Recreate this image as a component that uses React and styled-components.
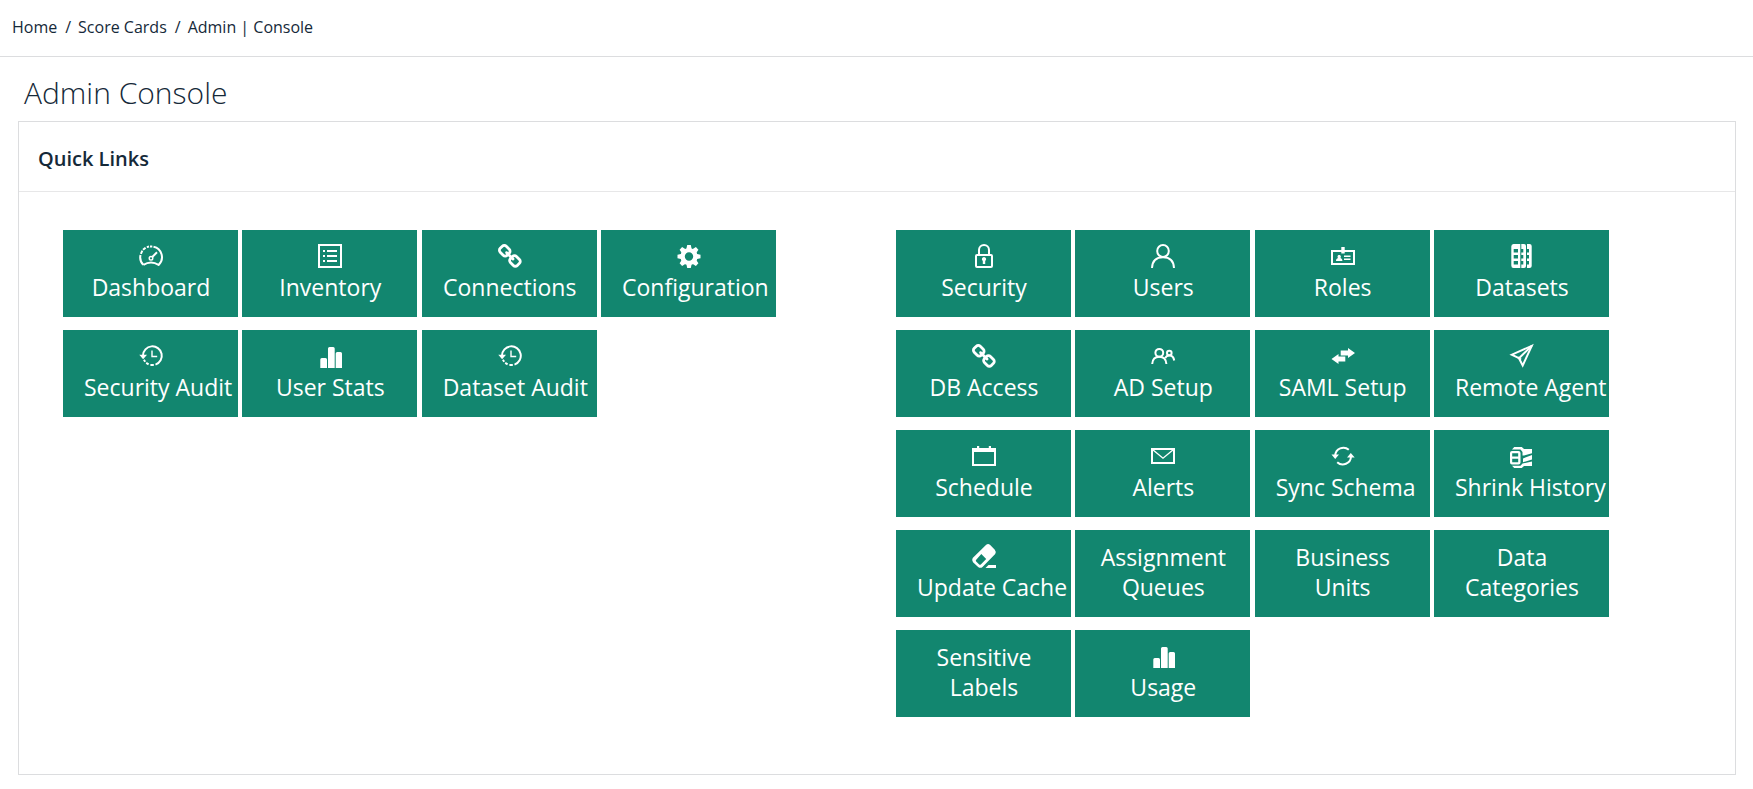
import React from "react";
import styled, { createGlobalStyle } from "styled-components";

const GlobalStyle = createGlobalStyle`
  *, *::before, *::after { box-sizing: border-box; }
  body {
    margin: 0;
    background: #fff;
    color: #152939;
    font-family: "Open Sans", "Noto Sans", sans-serif;
  }
`;

const Breadcrumb = styled.nav`
  padding: 15px 12px 17px;
  border-bottom: 1px solid #dcdddf;
  font-size: 16px;
  line-height: 24px;
`;

const Crumbs = styled.ol`
  display: flex;
  flex-wrap: wrap;
  margin: 0;
  padding: 0;
  list-style: none;
`;

const Crumb = styled.li`
  & + &::before {
    content: "/";
    padding: 0 7px 0 8px;
  }
`;

const CrumbLink = styled.a`
  color: inherit;
  text-decoration: none;
`;

const Page = styled.main`
  padding: 16px 17px 14px 18px;
`;

const PageTitle = styled.h1`
  margin: 0;
  padding: 0 6px 8px;
  font-size: 30px;
  font-weight: 300;
  line-height: 40px;
`;

const Panel = styled.section`
  border: 1px solid #dcdddf;
`;

const PanelTitle = styled.h2`
  margin: 0;
  padding: 22px 19px 17px;
  border-bottom: 1px solid #e7e7e8;
  font-size: 20px;
  font-weight: 600;
  line-height: 30px;
`;

const PanelBody = styled.div`
  display: grid;
  grid-template-columns: 1fr 1fr;
  padding: 38px 25px 57px;
`;

const TileGroup = styled.nav`
  display: grid;
  grid-template-columns: repeat(auto-fill, 175px);
  justify-content: space-between;
  align-content: start;
  gap: 13px 4px;
  max-width: 713px;
  margin-left: 19px;
`;

const Tile = styled.a`
  display: block;
  padding: 12px 20px 15px 21px;
  background: #12866f;
  color: #fff;
  font-size: 23px;
  line-height: 30px;
  text-align: center;
  text-decoration: none;
`;

const TileIcon = styled.svg`
  display: block;
  width: 24px;
  height: 24px;
  margin: 2px auto 4px;
  overflow: visible;
  fill: currentColor;
  stroke: none;

  .line {
    fill: none;
    stroke: currentColor;
    stroke-width: 2;
  }
  .thin {
    fill: none;
    stroke: currentColor;
    stroke-width: 1.4;
  }
  .heavy {
    fill: none;
    stroke: currentColor;
    stroke-width: 4.4;
  }
`;

const TileLabel = styled.span`
  display: block;
  white-space: ${(p) => (p.$wrap ? "normal" : "nowrap")};
`;

const cogTeeth = [0, 45, 90, 135, 180, 225, 270, 315];

const icons = {
  gauge: (
    <>
      <path className="line" d="M14.500 2.800A10.600 10.600 0 0 1 19.600 20.900Q12 16.200 4.400 20.900" strokeLinejoin="round" />
      <path className="line" d="M4.400 20.900A10.600 10.600 0 0 1 1.500 11M1.900 9.800L3.300 6.700M4 5.800L6.600 3.700M7.800 3.100L10 2.500M11 2.400H13.300" />
      <circle className="thin" cx="12" cy="14.300" r="1.800" />
      <path className="line" d="M13.300 13L18 8.200" />
    </>
  ),
  list: (
    <>
      <rect className="line" x="1" y="1" width="22" height="22" />
      <path d="M5 6h2v2H5zM9 6h10v2H9zM5 11h2v2H5zM9 11h10v2H9zM5 16h2v2H5zM9 16h10v2H9z" />
    </>
  ),
  link: (
    <path
      transform="scale(.0145) translate(-16 -16)"
      d="M1456 1216q0-40-28-68l-208-208q-28-28-68-28-42 0-72 32 3 3 19 18.500t21.500 21.500 15 19 13 25.500 3.500 27.500q0 40-28 68t-68 28q-15 0-27.500-3.500t-25.500-13-19-15-21.500-21.500-18.500-19q-33 31-33 73 0 40 28 68l206 207q27 27 68 27 40 0 68-26l147-146q28-28 28-67zm-703-705q0-40-28-68l-206-207q-28-28-68-28-39 0-68 27l-147 146q-28 28-28 67 0 40 28 68l208 208q27 27 68 27 42 0 72-31-3-3-19-18.500t-21.500-21.500-15-19-13-25.500-3.500-27.500q0-40 28-68t68-28q15 0 27.500 3.500t25.500 13 19 15 21.500 21.500 18.500 19q33-31 33-73zm895 705q0 120-85 203l-147 146q-83 83-203 83-121 0-204-85l-206-207q-83-83-83-203 0-123 88-209l-88-88q-86 88-208 88-120 0-204-84l-208-208q-84-84-84-204t85-203l147-146q83-83 203-83 121 0 204 85l206 207q83 83 83 203 0 123-88 209l88 88q86-88 208-88 120 0 204 84l208 208q84 84 84 204z"
    />
  ),
  cog: (
    <>
      <circle className="heavy" cx="12" cy="12.500" r="6.400" />
      {cogTeeth.map((a) => (
        <path key={a} d="M9.200 5.500L10.200 1h3.600l1 4.500z" transform={`rotate(${a} 12 12.500)`} />
      ))}
    </>
  ),
  history: (
    <>
      <path className="line" d="M4 11.600A9.400 9.400 0 1 1 16.500 20.600" />
      <path className="line" d="M14.800 21.100H11.400M9.600 20.300L7.200 18.800M6.200 17.700L4.900 15.800" />
      <path d="M.3 10.800H8L4.100 15.200z" />
      <path className="thin" d="M13 6.500v6h5.200" />
    </>
  ),
  bars: (
    <path d="M2.300 24v-8.500q0-1.500 1.500-1.500H7.500Q9 14 9 15.500V24zM10 24V4.500Q10 3 11.500 3h3.700Q16.700 3 16.700 4.500V24zM17.700 24V9.500Q17.700 8 19.200 8h3.300Q24 8 24 9.500V24z" />
  ),
  lock: (
    <>
      <rect className="line" x="4" y="11" width="16" height="12" rx="1" />
      <path className="line" d="M7 11V6a5 5 0 0 1 10 0v5" />
      <path d="M12 13a2.200 2.200 0 0 1 1.200 4v3h-2.400v-3A2.200 2.200 0 0 1 12 13z" />
    </>
  ),
  user: (
    <>
      <ellipse className="line" cx="12" cy="7" rx="5.800" ry="6" />
      <path className="line" d="M1 24C1.300 17.500 5 13.200 12 13.200S22.700 17.500 23 24" />
    </>
  ),
  users: (
    <>
      <circle className="line" cx="8.300" cy="8.800" r="3.900" />
      <path className="line" d="M1.200 20C1.500 15.500 4 12.800 8.300 12.800S15.100 15.500 15.400 20" />
      <circle className="line" cx="18.300" cy="9" r="2.300" />
      <path className="line" d="M14.200 14.200C15 12.300 16.300 11.400 18.300 11.400 21.300 11.400 22.800 13.500 23.200 16.500" />
    </>
  ),
  badge: (
    <>
      <rect className="line" x="1" y="7" width="22" height="13" />
      <path d="M10.300 3h3.400v6.500h-3.400zM5 17c0-2 .8-2.500 2-3C6 12.500 6.600 11 8.200 11s2.200 1.500 1.200 3c1.200.5 2 1 2 3zM13 11.500h6.500V13H13zM13 14.500h6.500V16H13z" />
    </>
  ),
  stack: (
    <>
      <path
        fillRule="evenodd"
        d="M3.500 0H10.300v24H3.500Q1.300 24 1.300 21.500v-19Q1.300 0 3.500 0zM3.700 5v3.500H8V5zM3.700 11v3.500H8V11zM3.700 17v3.500H8V17z"
      />
      <path d="M11.300 0h2.700q2 0 2 2v20q0 2-2 2h-2.700v-3.500h2V17h-2v-2.500h2V11h-2V8.500h2V5h-2zM17 0h2.500q2.200 0 2.200 2v20q0 2-2.200 2H17v-3.500h2V17h-2v-2.500h2V11h-2V8.500h2V5h-2z" />
    </>
  ),
  swap: <path d="M9.700 6.500H17V4l7 5-7 5v-2.500H9.700zM14.300 17.500H7.500V20l-7-5 7-5v2.500h6.800z" />,
  send: (
    <>
      <path className="line" d="M21.800 1.800L1.800 10.700 9 14.200 12.700 21.500z" />
      <path className="line" d="M21.800 1.800L9 14.200M7.800 13.200L11 15.600" />
    </>
  ),
  calendar: <path fillRule="evenodd" d="M0 4h5V2h2.200v2h9.600V2H19v2h5v18H0zM2 8v12h20V8z" />,
  mail: (
    <>
      <rect className="line" x="1" y="5" width="22" height="14" />
      <path className="thin" d="M1.500 5.500L12 14.200 22.500 5.500" />
    </>
  ),
  sync: (
    <>
      <path className="line" d="M4.200 11.500A8.200 8.200 0 0 1 17.800 5.800M20 12.500A8.200 8.200 0 0 1 6.200 18.200" />
      <path d="M.5 10.500H8L4.200 15zM16 13.500H23.700L19.800 9z" />
    </>
  ),
  shrink: (
    <>
      <path fillRule="evenodd" d="M2 7h6.500q2 0 2 2v9.500q0 2-2 2H2q-2 0-2-2V9q0-2 2-2zM2.200 9.300v3.300h6V9.300zM2.200 14.700v3.500h6v-3.500z" />
      <path d="M2 5.500L4.200 3h7.600L14 5h8v4.200l-8 2.300H12.500V8L10.500 5.500zM13 14.500L22 11v4.500l-9 2.800zM2 21.700h8.500l2-2.200L22 17.500V22h-8l-2.200 2H4.200z" />
    </>
  ),
  eraser: (
    <>
      <path
        fillRule="evenodd"
        d="M14.200.7q2-1.400 4 .3l4.600 4.700q1.700 2 .4 4.300L10.500 23q-2 1.700-4.400 0L1 18.300Q-.6 16.200.7 14zM9.300 10L4 16q-.5.900.2 1.600l3 3q.8.500 1.600-.1l5.400-5.500z"
      />
      <path d="M16.500 21H24v3H13.500z" />
    </>
  ),
};

const adminLinks = [
  { label: "Dashboard", icon: "gauge" },
  { label: "Inventory", icon: "list" },
  { label: "Connections", icon: "link" },
  { label: "Configuration", icon: "cog" },
  { label: "Security Audit", icon: "history" },
  { label: "User Stats", icon: "bars" },
  { label: "Dataset Audit", icon: "history" },
];

const setupLinks = [
  { label: "Security", icon: "lock" },
  { label: "Users", icon: "user" },
  { label: "Roles", icon: "badge" },
  { label: "Datasets", icon: "stack" },
  { label: "DB Access", icon: "link" },
  { label: "AD Setup", icon: "users" },
  { label: "SAML Setup", icon: "swap" },
  { label: "Remote Agent", icon: "send" },
  { label: "Schedule", icon: "calendar" },
  { label: "Alerts", icon: "mail" },
  { label: "Sync Schema", icon: "sync" },
  { label: "Shrink History", icon: "shrink" },
  { label: "Update Cache", icon: "eraser" },
  { label: "Assignment Queues" },
  { label: "Business Units" },
  { label: "Data Categories" },
  { label: "Sensitive Labels" },
  { label: "Usage", icon: "bars" },
];

function Tiles({ name, links }) {
  return (
    <TileGroup aria-label={name}>
      {links.map(({ label, icon }) => (
        <Tile key={label} href="#">
          {icon && (
            <TileIcon viewBox="0 0 24 24" aria-hidden="true">
              {icons[icon]}
            </TileIcon>
          )}
          <TileLabel $wrap={!icon}>{label}</TileLabel>
        </Tile>
      ))}
    </TileGroup>
  );
}

export default function App() {
  return (
    <>
      <GlobalStyle />
      <Breadcrumb aria-label="Breadcrumb">
        <Crumbs>
          <Crumb><CrumbLink href="#">Home</CrumbLink></Crumb>
          <Crumb><CrumbLink href="#">Score Cards</CrumbLink></Crumb>
          <Crumb><CrumbLink href="#" aria-current="page">Admin | Console</CrumbLink></Crumb>
        </Crumbs>
      </Breadcrumb>
      <Page>
        <PageTitle>Admin Console</PageTitle>
        <Panel>
          <PanelTitle>Quick Links</PanelTitle>
          <PanelBody>
            <Tiles name="Administration" links={adminLinks} />
            <Tiles name="Setup" links={setupLinks} />
          </PanelBody>
        </Panel>
      </Page>
    </>
  );
}
